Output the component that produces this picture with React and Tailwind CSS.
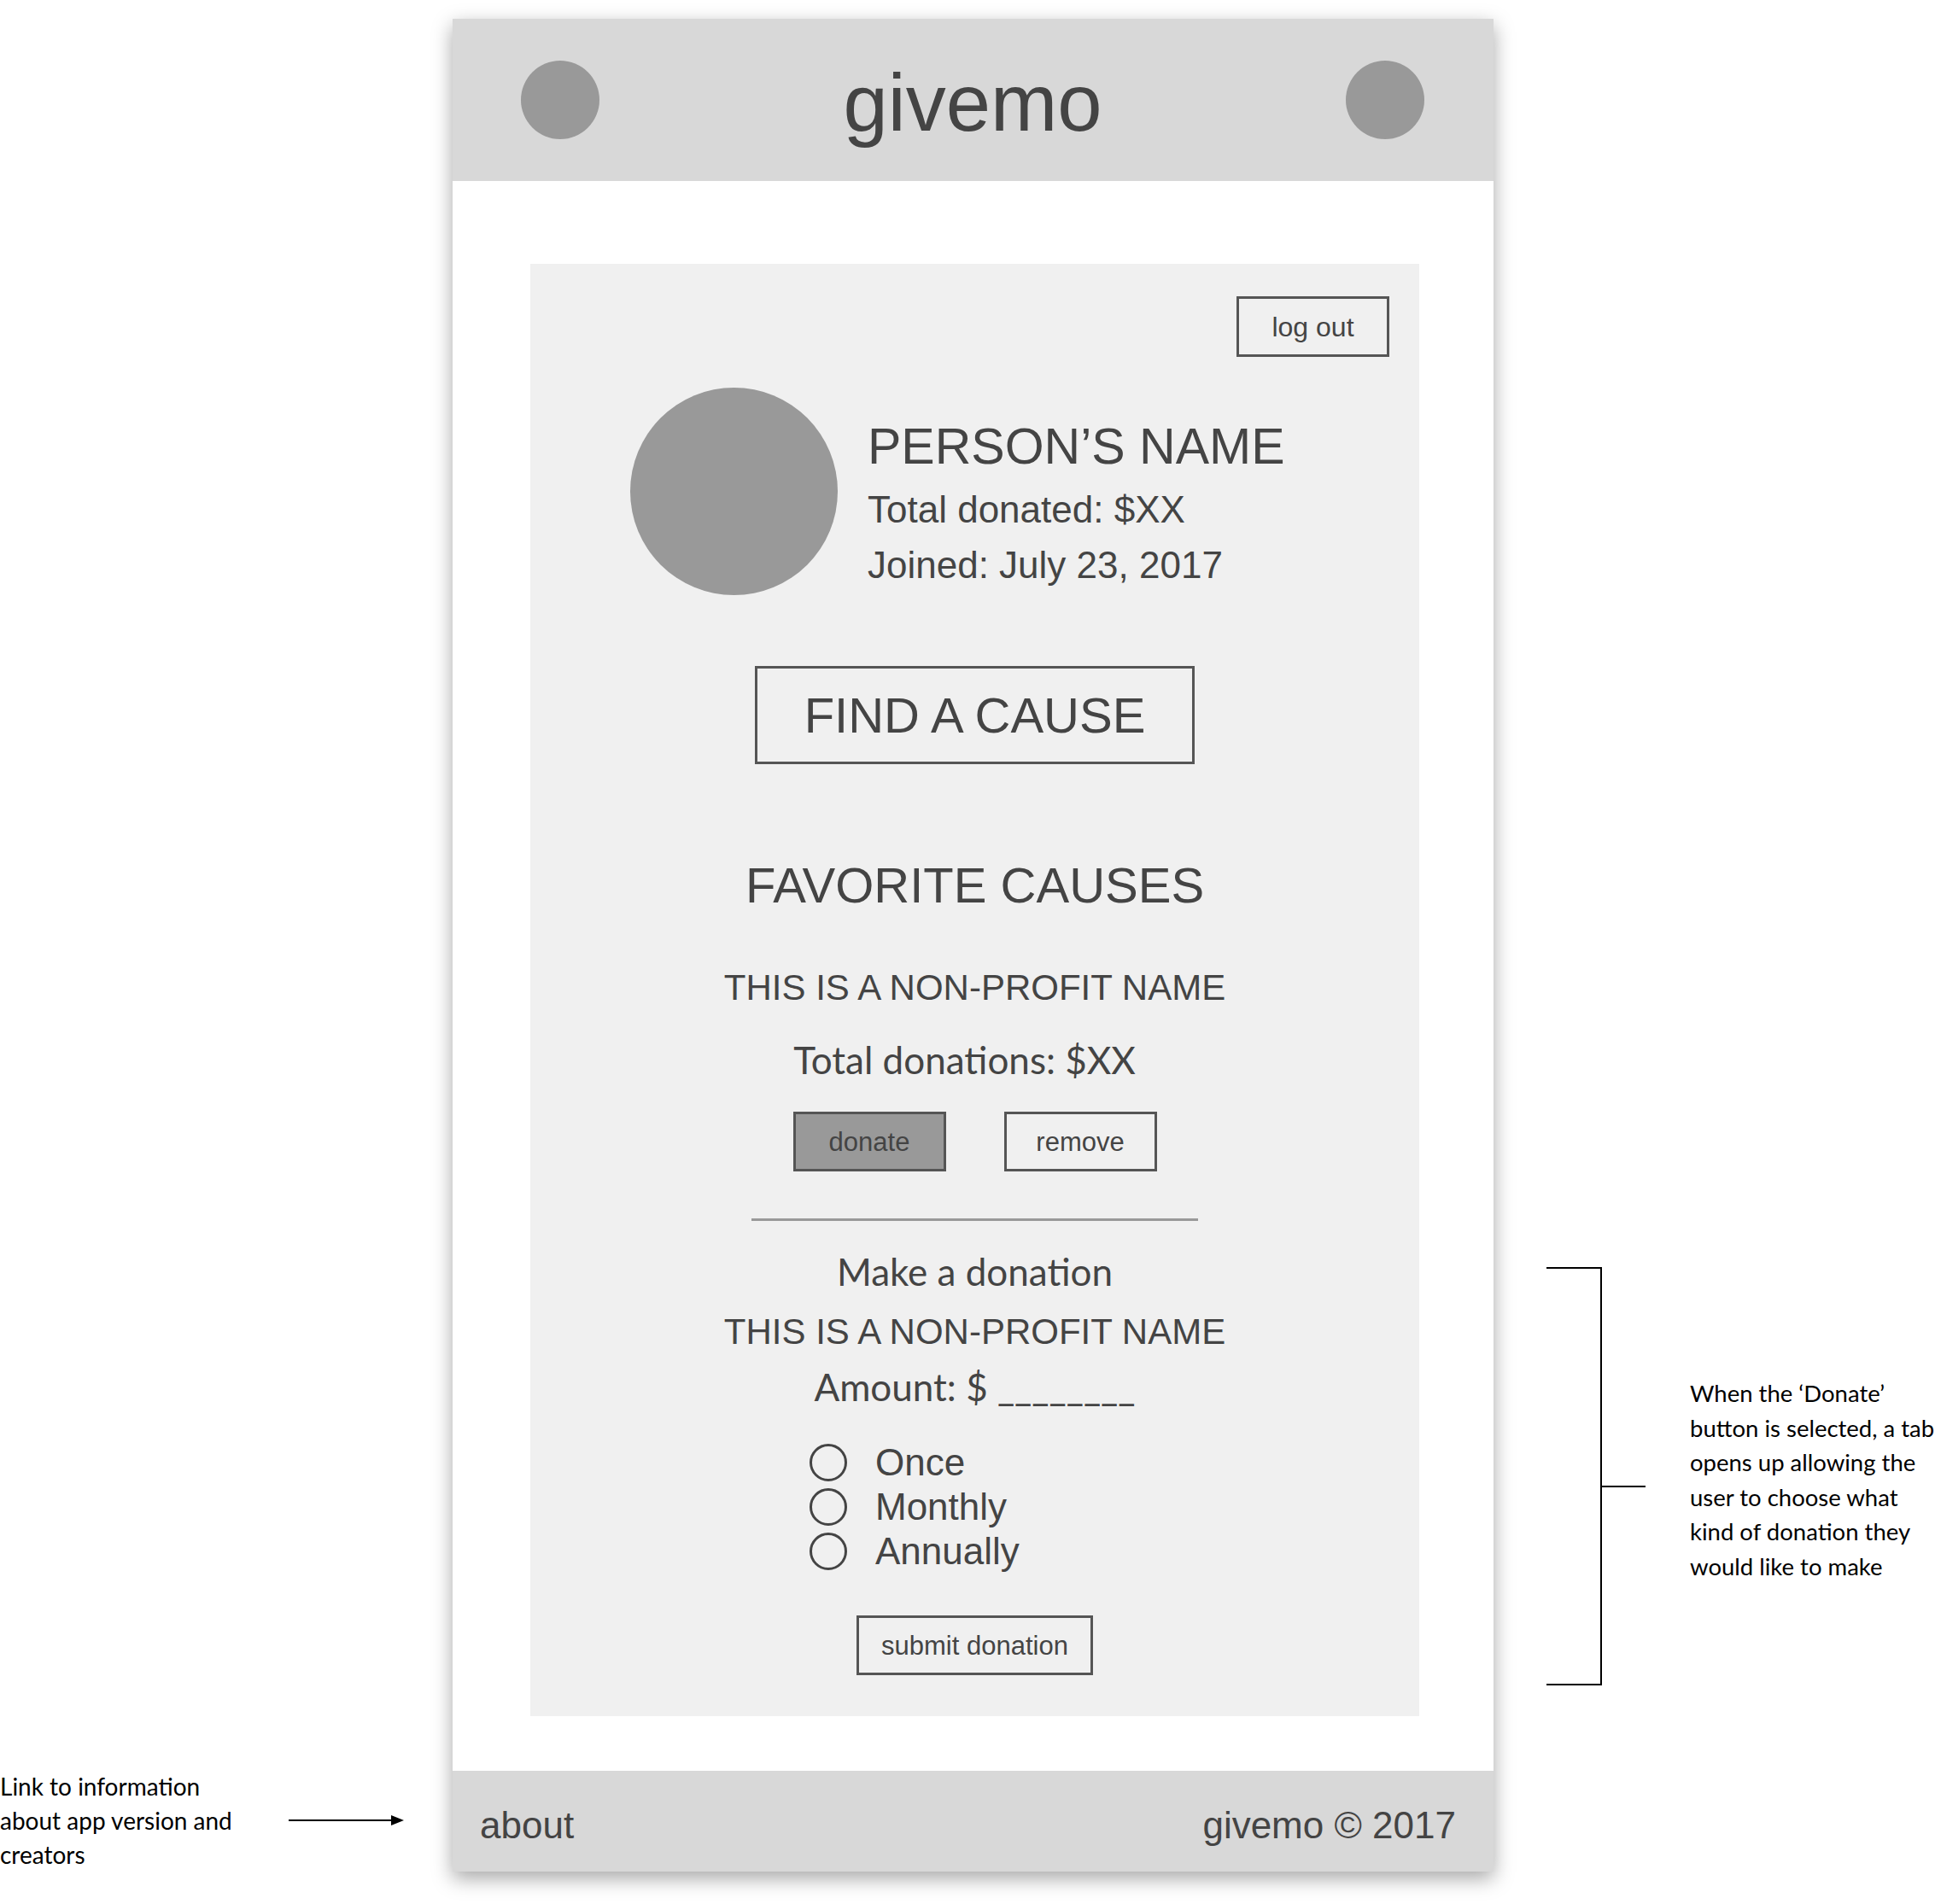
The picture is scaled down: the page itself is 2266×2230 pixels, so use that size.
import React from 'react';

const HELV = "font-['Liberation_Sans',Arial,sans-serif]";
const LATO = "font-['Lato',sans-serif]";

function Radio({ label }) {
  return (
    <div className="flex h-[52px] items-center">
      <span className="h-[44px] w-[44px] rounded-full border-[3px] border-[#444]" />
      <span className={`${HELV} ml-[33px] text-[44px] leading-none text-[#444]`}>{label}</span>
    </div>
  );
}

function Phone() {
  return (
    <div className="flex h-[2170px] w-[1219px] shrink-0 flex-col bg-white shadow-[0_8px_22px_rgba(0,0,0,0.35)]">
      {/* header */}
      <div className="flex h-[190px] items-center justify-between bg-[#d8d8d8] pl-[80px] pr-[81px]">
        <span className="h-[92px] w-[92px] rounded-full bg-[#999]" />
        <span className={`${HELV} mt-[8px] text-[94px] leading-none text-[#444]`}>givemo</span>
        <span className="h-[92px] w-[92px] rounded-full bg-[#999]" />
      </div>

      {/* contenido */}
      <div className="flex-1 pl-[91px] pr-[87px] pt-[97px] pb-[64px]">
        <div className="flex h-full flex-col bg-[#f0f0f0] text-[#444]">
          <div className="flex justify-end pt-[38px] pr-[35px]">
            <button className={`${HELV} h-[71px] w-[179px] border-[3px] border-[#555] text-[32px] leading-none text-[#444]`}>log out</button>
          </div>

          <div className="mt-[36px] flex items-start">
            <span className="ml-[117px] h-[243px] w-[243px] rounded-full bg-[#999]" />
            <div className={`${HELV} ml-[35px] mt-[40px] flex flex-col`}>
              <span className="text-[59px] leading-none">PERSON’S NAME</span>
              <span className="mt-[22px] text-[44px] leading-none">Total donated: $XX</span>
              <span className="mt-[21px] text-[44px] leading-none">Joined: July 23, 2017</span>
            </div>
          </div>

          <div className="mt-[83px] flex justify-center">
            <button className={`${HELV} h-[115px] w-[515px] border-[3px] border-[#555] text-[58px] leading-none text-[#444]`}>FIND A CAUSE</button>
          </div>

          <div className={`${HELV} mt-[113px] text-center text-[58px] leading-none`}>FAVORITE CAUSES</div>
          <div className={`${HELV} mt-[70px] text-center text-[42px] leading-none`}>THIS IS A NON-PROFIT NAME</div>
          <div className={`${LATO} mt-[41px] pr-[24px] text-center text-[44px] leading-none`}>Total donations: $XX</div>

          <div className="mt-[39px] flex justify-center gap-[68px]">
            <button className={`${HELV} h-[70px] w-[179px] border-[3px] border-[#555] bg-[#999] text-[31px] leading-none text-[#444]`}>donate</button>
            <button className={`${HELV} h-[70px] w-[179px] border-[3px] border-[#555] text-[31px] leading-none text-[#444]`}>remove</button>
          </div>

          <div className="mx-auto mt-[55px] h-[3px] w-[523px] bg-[#999]" />

          <div className={`${LATO} mt-[37px] text-center text-[44px] leading-none`}>Make a donation</div>
          <div className={`${HELV} mt-[28px] text-center text-[42px] leading-none`}>THIS IS A NON-PROFIT NAME</div>
          <div className={`${LATO} mt-[21px] text-center text-[44px] leading-none`}>Amount: $ ________</div>

          <div className="ml-[327px] mt-[41px] flex flex-col">
            <Radio label="Once" />
            <Radio label="Monthly" />
            <Radio label="Annually" />
          </div>

          <div className="mt-[49px] flex justify-center">
            <button className={`${HELV} h-[70px] w-[277px] border-[3px] border-[#555] text-[31px] leading-none text-[#444]`}>submit donation</button>
          </div>
        </div>
      </div>

      {/* pie */}
      <div className={`${HELV} flex h-[118px] items-start justify-between bg-[#d8d8d8] pl-[32px] pr-[44px] pt-[42px] text-[44px] leading-none text-[#444]`}>
        <span>about</span>
        <span>givemo © 2017</span>
      </div>
    </div>
  );
}

export default function App() {
  return (
    <div className="flex h-[2230px] w-[2266px] items-start overflow-hidden bg-white pt-[22px]">
      {/* nota izquierda */}
      <div className="flex h-[2170px] w-[530px] shrink-0 items-end">
        <div className="flex items-center">
          <p className={`${LATO} w-[338px] text-[28px] leading-[40px] text-black`}>
            Link to information<br />about app version and<br />creators
          </p>
          <svg width="136" height="16" viewBox="0 0 136 16">
            <line x1="0" y1="8" x2="120" y2="8" stroke="black" strokeWidth="2" />
            <polygon points="120,2 135,8 120,14" fill="black" />
          </svg>
        </div>
      </div>

      <Phone />

      {/* nota derecha */}
      <div className="ml-[62px] mt-[1462px] flex shrink-0 items-start">
        <div className="h-[490px] w-[65px] border-y-2 border-r-2 border-black" />
        <div className="mt-[256px] h-[2px] w-[51px] bg-black" />
        <p className={`${LATO} ml-[52px] mt-[128px] whitespace-nowrap text-[27.5px] leading-[40.5px] text-black`}>
          When the ‘Donate’<br />
          button is selected, a tab<br />
          opens up allowing the<br />
          user to choose what<br />
          kind of donation they<br />
          would like to make
        </p>
      </div>
    </div>
  );
}
